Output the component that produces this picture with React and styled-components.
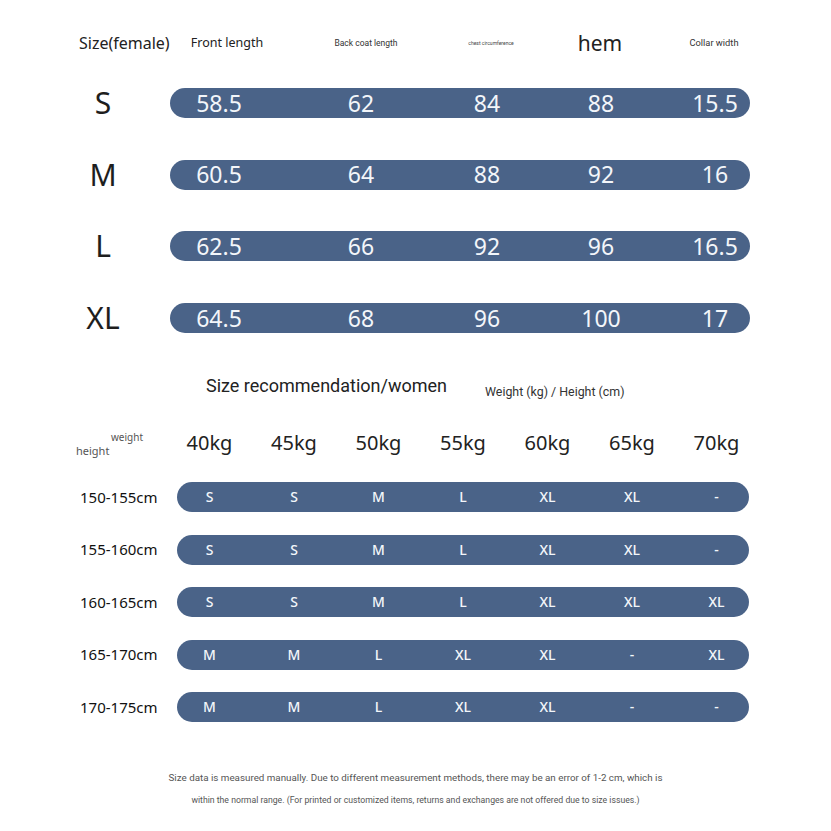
import styled, { createGlobalStyle } from 'styled-components'

const GlobalStyle = createGlobalStyle`
  body {
    margin: 0;
    background: #ffffff;
    font-family: "Noto Sans", "DejaVu Sans", sans-serif;
    color: #222222;
  }
`

const PILL = '#4a6388'

const Page = styled.div`
  width: 831px;
  height: 831px;
  overflow: hidden;
  background: #ffffff;
`

// ---------- measurement table ----------
const TopTable = styled.section`
  padding-left: 60px;
  padding-top: 28px;
`

const HeaderRow = styled.div`
  display: grid;
  grid-template-columns: 110px 114px 164px 86px 132px 96px;
  align-items: center;
  height: 30px;
  white-space: nowrap;
`

const HeadCell = styled.div`
  text-align: ${(p) => (p.$left ? 'left' : 'center')};
  padding-left: ${(p) => (p.$left ? '19px' : '0')};
  font-family: ${(p) => (p.$roboto ? '"Roboto", "Liberation Sans", sans-serif' : '"Noto Sans", sans-serif')};
  font-size: ${(p) => p.$size}px;
  line-height: 1;
  color: ${(p) => p.$color || '#222222'};
`

const SizeRows = styled.div`
  display: flex;
  flex-direction: column;
  gap: 41.7px;
  margin-top: 30px;
`

const SizeRow = styled.div`
  display: flex;
  align-items: center;
  height: 30px;
`

const SizeLabel = styled.div`
  width: 86px;
  margin-right: 24px;
  text-align: center;
  font-size: 30px;
  line-height: 30px;
  color: #1e1e1e;
`

const MeasurePill = styled.div`
  width: 580px;
  height: 30px;
  border-radius: 15px;
  background: ${PILL};
  display: grid;
  grid-template-columns: 98px 186px 66px 162px 66px;
  align-items: center;
  justify-items: center;
`

const Value = styled.span`
  font-size: 23px;
  line-height: 1;
  color: #f3f6fa;
  white-space: nowrap;
`

// ---------- recommendation ----------
const TitleRow = styled.div`
  display: flex;
  align-items: center;
  padding-left: 206px;
  margin-top: 40px;
  white-space: nowrap;
`

const Title = styled.h2`
  margin: 0;
  font-family: "Roboto", "Liberation Sans", sans-serif;
  font-weight: 400;
  font-size: 18px;
  line-height: 22px;
  color: #222222;
`

const Unit = styled.span`
  margin-left: 38px;
  margin-top: 12px;
  font-family: "Roboto", "Liberation Sans", sans-serif;
  font-size: 12.4px;
  line-height: 14px;
  color: #333333;
`

const RecTable = styled.section`
  padding-left: 76px;
  margin-top: 29px;
`

const KgRow = styled.div`
  display: flex;
  height: 30px;
  align-items: center;
`

const Corner = styled.div`
  width: 101px;
  height: 30px;
  box-sizing: border-box;
  padding-top: 3px;
  display: flex;
  flex-direction: column;
  gap: 1px;
  color: #555555;
`

const CornerTop = styled.span`
  padding-left: 35px;
  font-size: 10px;
  line-height: 12px;
`

const CornerBottom = styled.span`
  font-size: 11px;
  line-height: 13px;
`

// seven equal columns, a little wider than the pill so the outer ones sit near its ends
const Cols = styled.div`
  display: grid;
  grid-template-columns: repeat(7, 1fr);
  margin: 0 -9.75px;
  width: 591.5px;
  align-items: center;
  justify-items: center;
`

const Kg = styled.span`
  font-size: 20px;
  line-height: 1;
  color: #222222;
`

const RecRows = styled.div`
  display: flex;
  flex-direction: column;
  gap: 22.5px;
  margin-top: 24px;
`

const RecRow = styled.div`
  display: flex;
  align-items: center;
  height: 30px;
`

const RowLabel = styled.div`
  width: 101px;
  padding-left: 4px;
  box-sizing: border-box;
  font-size: 15px;
  font-weight: 400;
  line-height: 1;
  color: #111111;
  white-space: nowrap;
`

const RecPill = styled.div`
  width: 572px;
  height: 30px;
  border-radius: 15px;
  background: ${PILL};
  display: flex;
  align-items: center;
`

const Fit = styled.span`
  font-size: 14px;
  font-weight: 500;
  line-height: 1;
  color: #f3f6fa;
`

// ---------- footer ----------
const Footer = styled.footer`
  margin-top: 43.5px;
  text-align: center;
  font-family: "Roboto", "Liberation Sans", sans-serif;
  color: #555555;
  white-space: nowrap;
`

const Note = styled.p`
  margin: 0;
  font-size: ${(p) => p.$size}px;
  line-height: 23px;
`

const headers = [
  { text: 'Size(female)', size: 16, left: true },
  { text: 'Front length', size: 12.5 },
  { text: 'Back coat length', size: 8.5, roboto: true, color: '#333' },
  { text: 'chest circumference', size: 5, roboto: true, color: '#444' },
  { text: 'hem', size: 21 },
  { text: 'Collar width', size: 9.3, roboto: true, color: '#333' },
]

const sizes = [
  ['S', '58.5', '62', '84', '88', '15.5'],
  ['M', '60.5', '64', '88', '92', '16'],
  ['L', '62.5', '66', '92', '96', '16.5'],
  ['XL', '64.5', '68', '96', '100', '17'],
]

const weights = ['40kg', '45kg', '50kg', '55kg', '60kg', '65kg', '70kg']

const recs = [
  ['150-155cm', 'S', 'S', 'M', 'L', 'XL', 'XL', '-'],
  ['155-160cm', 'S', 'S', 'M', 'L', 'XL', 'XL', '-'],
  ['160-165cm', 'S', 'S', 'M', 'L', 'XL', 'XL', 'XL'],
  ['165-170cm', 'M', 'M', 'L', 'XL', 'XL', '-', 'XL'],
  ['170-175cm', 'M', 'M', 'L', 'XL', 'XL', '-', '-'],
]

export default function App() {
  return (
    <Page>
      <GlobalStyle />
      <TopTable>
        <HeaderRow>
          {headers.map((h) => (
            <HeadCell key={h.text} $left={h.left} $size={h.size} $roboto={h.roboto} $color={h.color}>
              {h.text}
            </HeadCell>
          ))}
        </HeaderRow>
        <SizeRows>
          {sizes.map(([size, ...values]) => (
            <SizeRow key={size}>
              <SizeLabel>{size}</SizeLabel>
              <MeasurePill>
                {values.map((v, i) => (
                  <Value key={i}>{v}</Value>
                ))}
              </MeasurePill>
            </SizeRow>
          ))}
        </SizeRows>
      </TopTable>

      <TitleRow>
        <Title>Size recommendation/women</Title>
        <Unit>Weight (kg) / Height (cm)</Unit>
      </TitleRow>

      <RecTable>
        <KgRow>
          <Corner>
            <CornerTop>weight</CornerTop>
            <CornerBottom>height</CornerBottom>
          </Corner>
          <Cols>
            {weights.map((w) => (
              <Kg key={w}>{w}</Kg>
            ))}
          </Cols>
        </KgRow>
        <RecRows>
          {recs.map(([label, ...fits]) => (
            <RecRow key={label}>
              <RowLabel>{label}</RowLabel>
              <RecPill>
                <Cols>
                  {fits.map((f, i) => (
                    <Fit key={i}>{f}</Fit>
                  ))}
                </Cols>
              </RecPill>
            </RecRow>
          ))}
        </RecRows>
      </RecTable>

      <Footer>
        <Note $size={9.8}>
          Size data is measured manually. Due to different measurement methods, there may be an error of 1-2 cm, which is
        </Note>
        <Note $size={8.7}>
          within the normal range. (For printed or customized items, returns and exchanges are not offered due to size issues.)
        </Note>
      </Footer>
    </Page>
  )
}
